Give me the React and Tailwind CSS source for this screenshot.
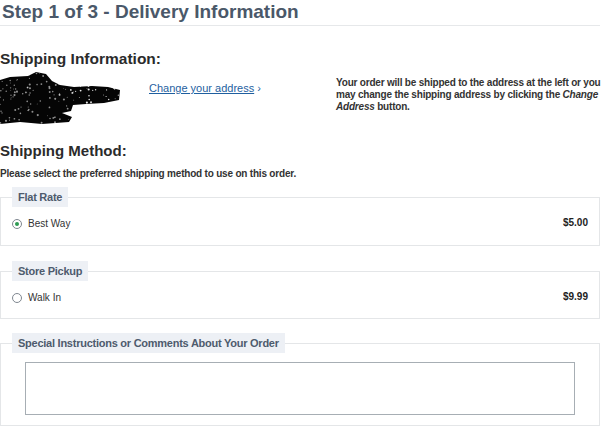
import React from 'react';

const Blob = () => {
  // scribbled-out address block
  let seed = 7;
  const rand = () => {
    seed = (seed * 9301 + 49297) % 233280;
    return seed / 233280;
  };
  const dots = [];
  for (let i = 0; i < 170; i++) {
    const x = rand() * 120;
    const y = rand() * 52;
    dots.push({ x, y, r: 0.4 + rand() * 0.7, light: x > 70 });
  }
  return (
    <svg width="122" height="52" viewBox="0 0 122 52" className="block">
      <path
        d="M0 8 L10 5 L28 4 L36 0 L46 2 L52 9 L60 13 L74 15 L92 14 L108 15 L120 18 L119 28 L104 31 L86 32 L73 33 L71 39 L62 41 L72 45 L69 50 L42 52 L20 50 L0 52 Z"
        fill="#050505"
      />
      {dots.map((d, i) => (
        <circle key={i} cx={d.x} cy={d.y} r={d.r} fill="#ffffff" opacity={d.light ? 0.9 : 0.55} />
      ))}
    </svg>
  );
};

const Radio = ({ checked }) => (
  <span className="flex h-[10px] w-[10px] items-center justify-center rounded-full border border-[#7f8790] bg-white">
    {checked && <span className="h-[4px] w-[4px] rounded-full bg-[#2e9a52]" />}
  </span>
);

const Box = ({ title, className, children }) => (
  <fieldset className={`border border-[#e4e6e8] px-[11px] ${className}`}>
    <legend className="h-[20px] bg-[#edf0f5] px-[6px] text-[11px] font-bold leading-[20px] tracking-[-0.25px] text-[#4e5b6d]">
      {title}
    </legend>
    {children}
  </fieldset>
);

const ShipOption = ({ label, price, checked, last }) => (
  <div
    className={`box-content flex h-[12px] items-center justify-between pt-[11px] ${last ? 'pb-[14px]' : 'pb-[15px]'}`}
  >
    <div className="flex items-center gap-[6px]">
      <Radio checked={checked} />
      <span className="text-[10px] leading-[12px] text-[#333]">{label}</span>
    </div>
    <span className="-mt-[2px] text-[10px] font-bold leading-[12px] text-[#222]">{price}</span>
  </div>
);

export default function App() {
  return (
    <div className="min-h-screen bg-white">
      <div className="w-[600px] font-['Liberation_Sans',Arial,sans-serif] text-[#333]">
        <h1 className="border-b border-[#e6e8ea] pb-[1px] pl-[2px] text-[19px] font-bold leading-[24px] text-[#4a5869]">
          Step 1 of 3 - Delivery Information
        </h1>

        <h2 className="mt-[24px] text-[15.5px] font-bold leading-[18px] text-[#2b2b2b]">Shipping Information:</h2>

        <div className="flex items-start">
          <div className="mt-[4px] w-[149px] shrink-0">
            <Blob />
          </div>
          <div className="mt-[14px] w-[187px] shrink-0 text-[11px] leading-[13px]">
            <a href="#" className="text-[#1f5f9f] underline">Change your address</a>
            <span className="text-[#1f5f9f]"> ›</span>
          </div>
          <p className="mt-[9px] whitespace-nowrap text-[10px] font-bold leading-[12px] tracking-[-0.2px] text-[#333]">
            Your order will be shipped to the address at the left or you
            <br />
            may change the shipping address by clicking the <i>Change</i>
            <br />
            <i>Address</i> button.
          </p>
        </div>

        <h2 className="mt-[18px] text-[15px] font-bold leading-[18px] text-[#2b2b2b]">Shipping Method:</h2>
        <p className="mt-[7px] text-[10px] font-bold leading-[13px] tracking-[-0.2px] text-[#333]">
          Please select the preferred shipping method to use on this order.
        </p>

        <Box title="Flat Rate" className="mt-[7px]">
          <ShipOption label="Best Way" price="$5.00" checked />
        </Box>
        <Box title="Store Pickup" className="mt-[15px]">
          <ShipOption label="Walk In" price="$9.99" last />
        </Box>
        <Box title="Special Instructions or Comments About Your Order" className="mt-[14px]">
          <div className="pb-[10px] pl-[13px] pt-[9px]">
            <textarea className="block h-[53px] w-[550px] resize-none border border-[#a7aeb4] bg-white" />
          </div>
        </Box>
      </div>
    </div>
  );
}
